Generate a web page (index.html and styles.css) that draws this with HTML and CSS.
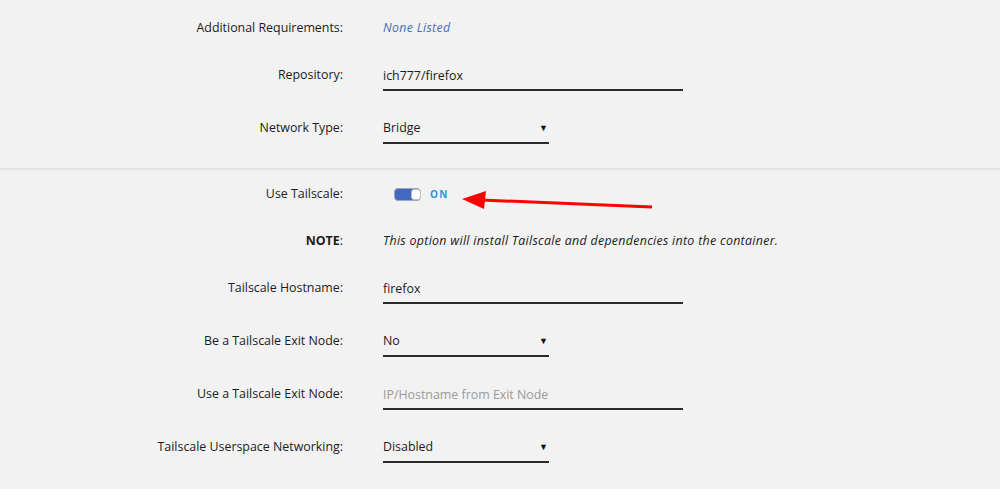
FILE: index.html
```html
<!DOCTYPE html>
<html lang="en">
<head>
  <meta charset="UTF-8" />
  <meta name="viewport" content="width=device-width, initial-scale=1.0" />
  <title>Add Container</title>
  <link rel="stylesheet" href="styles.css">
</head>
<body>
  <form class="settings">
    <div class="row">
      <label class="name">Additional Requirements:</label>
      <div class="value"><span class="muted-link">None Listed</span></div>
    </div>
    <div class="row">
      <label class="name" for="repo">Repository:</label>
      <div class="value"><input type="text" id="repo" class="field wide" value="ich777/firefox" /></div>
    </div>
    <div class="row">
      <label class="name" for="net">Network Type:</label>
      <div class="value">
        <div class="select">
          <select id="net" class="field narrow">
            <option>Bridge</option>
            <option>Host</option>
            <option>None</option>
          </select>
        </div>
      </div>
    </div>

    <hr class="divider" />

    <div class="row">
      <label class="name">Use Tailscale:</label>
      <div class="value">
        <span class="switch"><span class="knob"></span></span>
        <span class="switch-text">ON</span>
      </div>
    </div>
    <div class="row">
      <label class="name"><b>NOTE</b>:</label>
      <div class="value"><em class="note">This option will install Tailscale and dependencies into the container.</em></div>
    </div>
    <div class="row">
      <label class="name" for="ts-host">Tailscale Hostname:</label>
      <div class="value"><input type="text" id="ts-host" class="field wide" value="firefox" /></div>
    </div>
    <div class="row">
      <label class="name" for="ts-exit">Be a Tailscale Exit Node:</label>
      <div class="value">
        <div class="select">
          <select id="ts-exit" class="field narrow">
            <option>No</option>
            <option>Yes</option>
          </select>
        </div>
      </div>
    </div>
    <div class="row">
      <label class="name" for="ts-use-exit">Use a Tailscale Exit Node:</label>
      <div class="value"><input type="text" id="ts-use-exit" class="field wide" placeholder="IP/Hostname from Exit Node" /></div>
    </div>
    <div class="row">
      <label class="name" for="ts-userspace">Tailscale Userspace Networking:</label>
      <div class="value">
        <div class="select">
          <select id="ts-userspace" class="field narrow">
            <option>Disabled</option>
            <option>Enabled</option>
          </select>
        </div>
      </div>
    </div>
  </form>

  <!-- annotation arrow pointing at the toggle -->
  <svg class="arrow" width="200" height="24" viewBox="0 0 200 24">
    <line x1="20" y1="11" x2="191" y2="18" stroke="#f00" stroke-width="3" />
    <polygon points="1,10 25,2 23,20" fill="#f00" />
  </svg>
</body>
</html>
```

FILE: styles.css
```css
/* Base */
* {
  box-sizing: border-box;
  margin: 0;
  padding: 0;
}
body {
  font-family: "Open Sans", "Noto Sans", sans-serif;
  font-size: 12.4px;
  line-height: 20px;
  background-color: #f2f2f2;
  color: #1c1b1b;
  position: relative;
  min-height: 489px;
}

/* Settings rows */
.settings {
  padding-top: 18px;
  display: flex;
  flex-direction: column;
  gap: 27px;
}
.row {
  display: grid;
  grid-template-columns: 343px 1fr;
  column-gap: 40px;
  align-items: start;
}
.name {
  text-align: right;
}
.value {
  display: flex;
  align-items: center;
  min-height: 20px;
}
.muted-link {
  color: #486dba;
  font-style: italic;
  letter-spacing: 0.3px;
}
.note {
  letter-spacing: 0.3px;
}

/* Inputs */
.field {
  font: inherit;
  color: #1c1b1b;
  background: transparent;
  border: none;
  border-bottom: 2px solid #2b2b2b;
  height: 26px;
  padding: 0 0 4px 0;
  outline: none;
  line-height: 20px;
}
.field::placeholder {
  color: #9a9a9a;
}
.wide {
  width: 300px;
}
.narrow {
  width: 166px;
  appearance: none;
  -webkit-appearance: none;
  border-radius: 0;
  cursor: pointer;
}
.select {
  position: relative;
}
.select::after {
  content: "\25BC";
  position: absolute;
  right: 1px;
  top: 4px;
  font-size: 9px;
  line-height: 12px;
  color: #111;
  pointer-events: none;
}

/* Section divider */
.divider {
  border: none;
  border-top: 2px solid #e3e3e3;
  margin: -3px 0 -13px;
}

/* Toggle switch */
.switch {
  display: inline-flex;
  width: 27px;
  height: 13px;
  margin-left: 11px;
  background: #4268c0;
  border: 1px solid #9aa6c4;
  border-radius: 4px;
  justify-content: flex-end;
}
.knob {
  width: 10px;
  height: 11px;
  background: #fff;
  border-radius: 3px;
  border: 1px solid #bdbdbd;
  margin-right: -1px;
}
.switch-text {
  margin-left: 9px;
  font-size: 10px;
  font-weight: 700;
  letter-spacing: 1.4px;
  color: #2f97d6;
}

/* Annotation */
.arrow {
  position: absolute;
  left: 461px;
  top: 189px;
}
```
